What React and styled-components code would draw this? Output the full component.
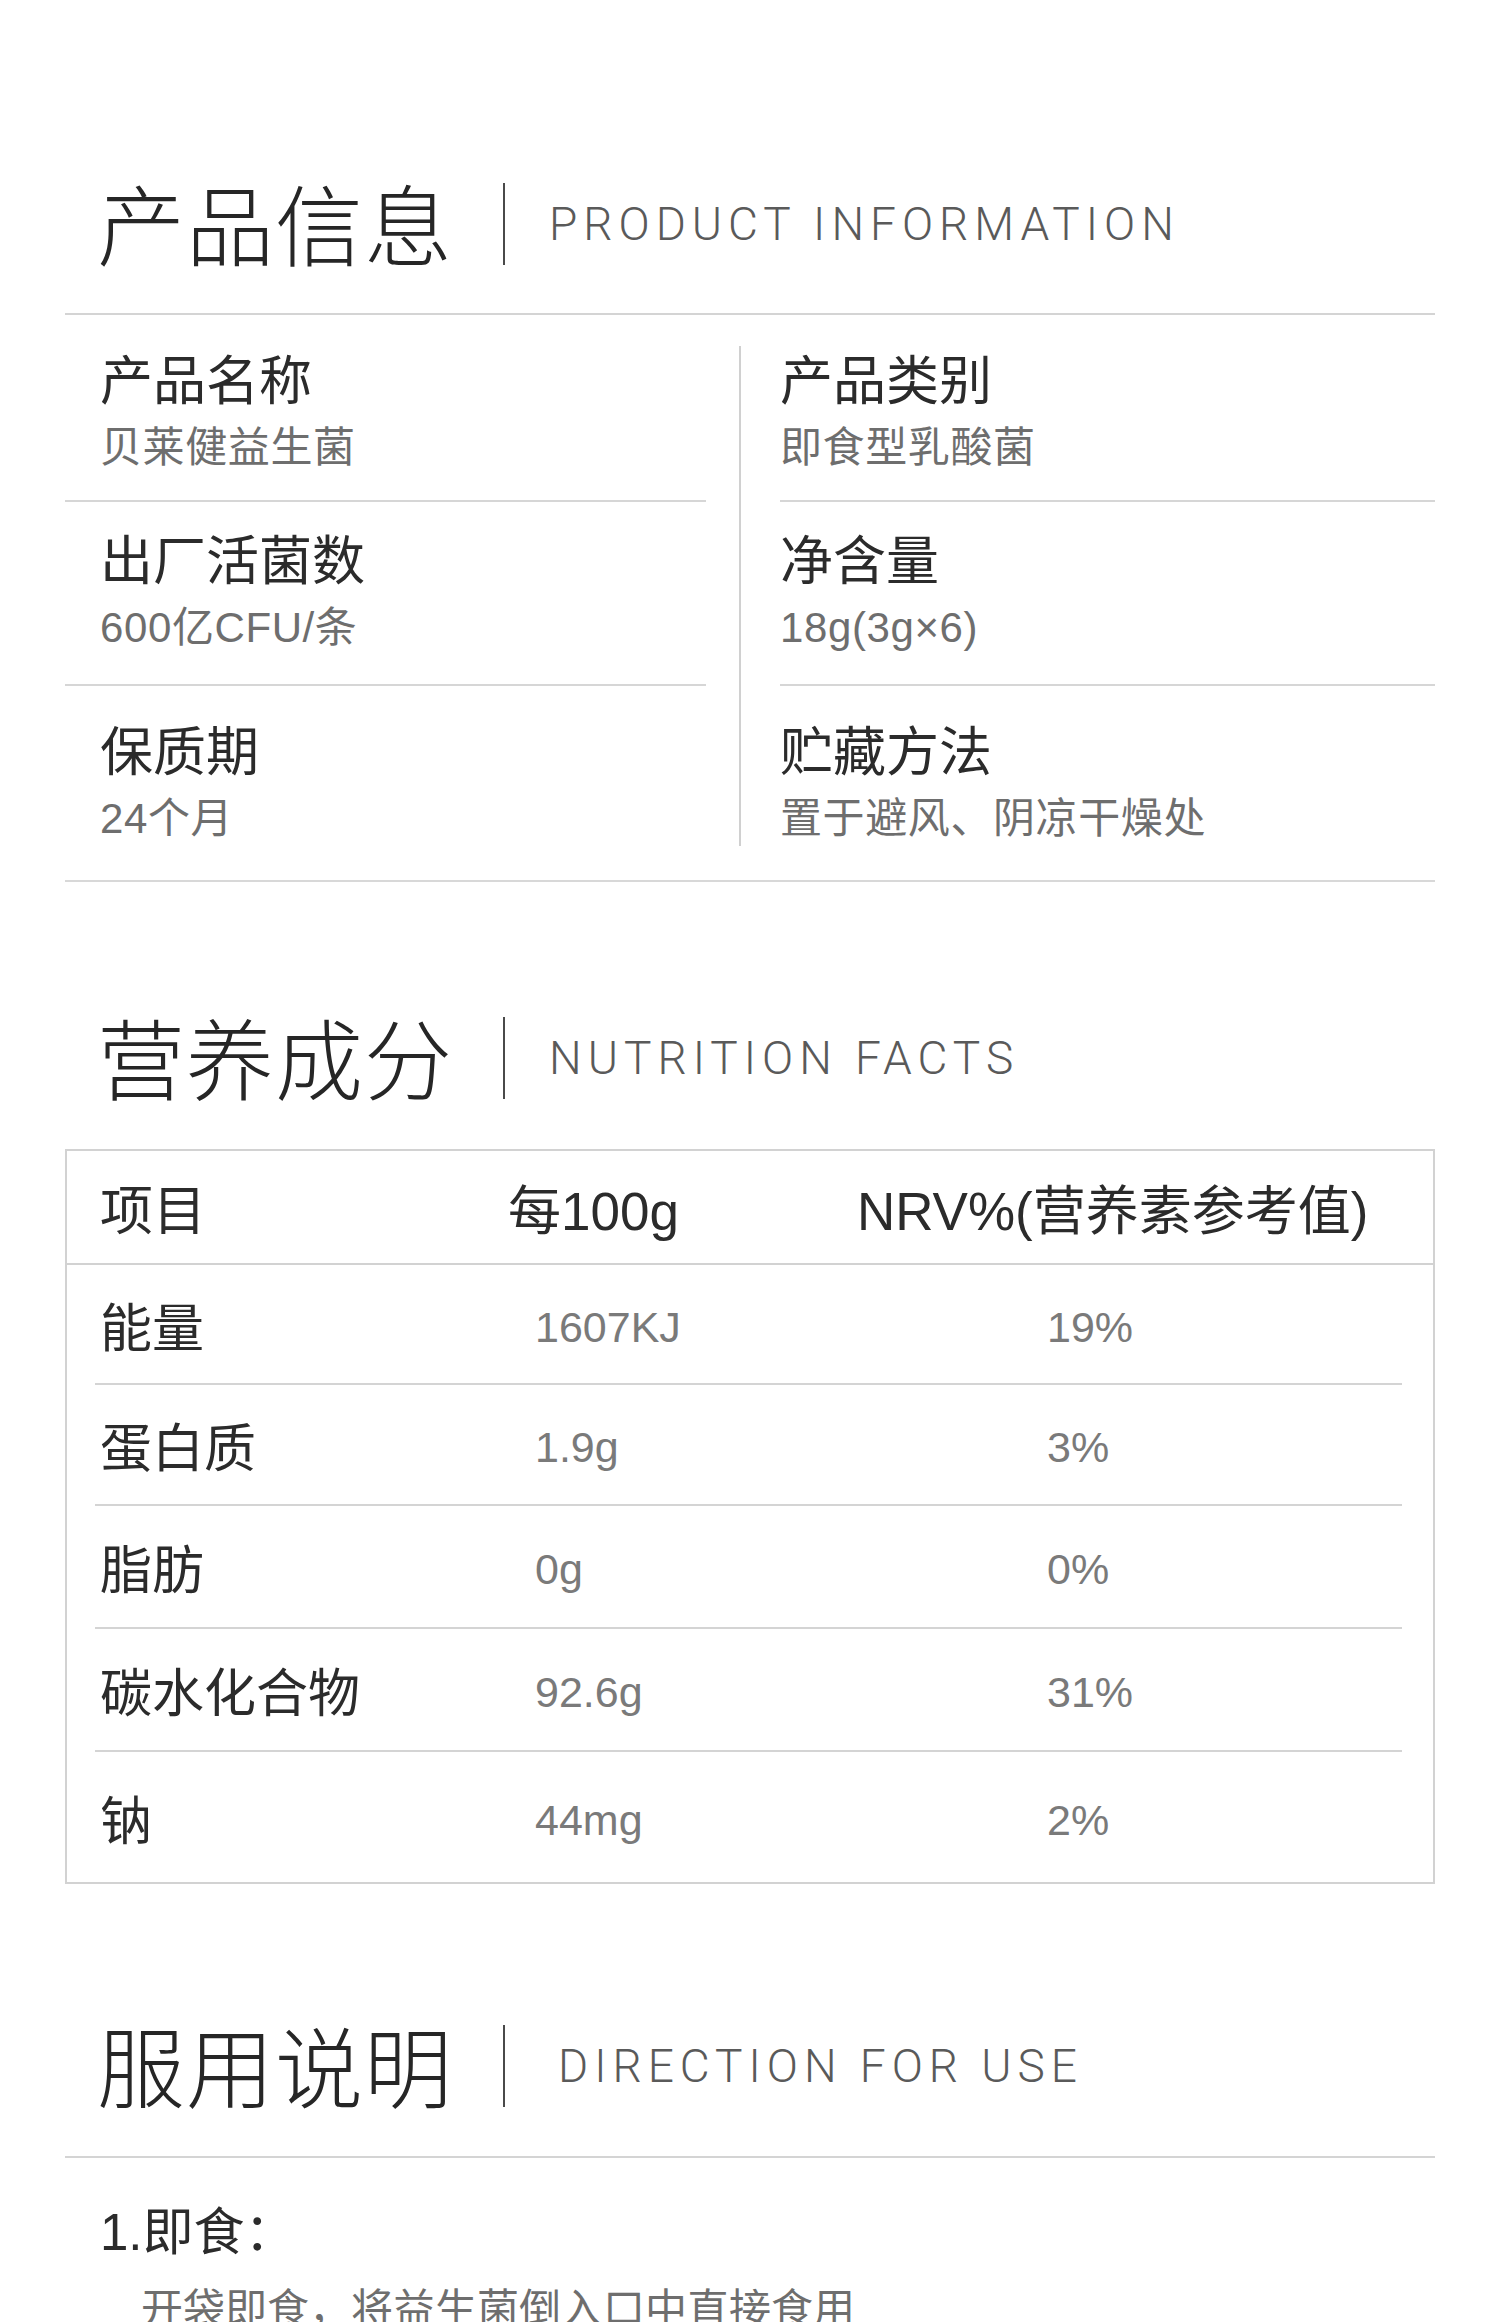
import React from "react";
import styled, { createGlobalStyle } from "styled-components";

const GlobalStyle = createGlobalStyle`
  html, body { margin: 0; padding: 0; background: #ffffff; }
  body { font-family: "Liberation Sans", "Noto Sans CJK SC", sans-serif; color: #333; }
  * { box-sizing: border-box; }
`;

const Page = styled.div`
  width: 1500px;
  padding: 161px 65px 0;
  background: #fff;
`;

const SectionHead = styled.div`
  display: flex;
  align-items: center;
  height: 120px;
  margin-top: ${(p) => p.$top || 0}px;
  padding-left: 32px;
`;

const Title = styled.h2`
  margin: 0;
  font-family: "Noto Sans CJK SC", sans-serif;
  font-weight: 300;
  font-size: 88px;
  line-height: 1;
  color: #262626;
  letter-spacing: 1px;
`;

const VBar = styled.span`
  width: 2px;
  height: 82px;
  margin: 6px 44px 0 50px;
  background: #4a4a4a;
`;

const SubTitle = styled.span`
  margin-top: 6px;
  margin-left: ${(p) => p.$shift || 0}px;
  font-family: "Roboto", "Liberation Sans", sans-serif;
  font-weight: 300;
  font-size: 46px;
  letter-spacing: 6px;
  color: #5a5a5a;
`;

const HRule = styled.div`
  height: 2px;
  background: #d4d4d4;
  margin-top: ${(p) => p.$top || 0}px;
`;

const InfoGrid = styled.div`
  display: flex;
  border-bottom: 2px solid #d8d8d8;
`;

const InfoColumn = styled.div`
  display: flex;
  flex-direction: column;
  width: ${(p) => p.$width}px;
  margin-right: ${(p) => p.$right || 0}px;
  margin-left: ${(p) => p.$left || 0}px;
`;

const InfoDivider = styled.div`
  width: 2px;
  background: #d0d0d0;
  margin: 31px 0 34px;
`;

const InfoCell = styled.div`
  height: ${(p) => p.$h}px;
  padding: ${(p) => p.$padTop}px 0 0 ${(p) => p.$pad}px;
  border-top: ${(p) => (p.$first ? "none" : "2px solid #d6d6d6")};
`;

const Label = styled.div`
  font-family: "Noto Sans CJK SC", sans-serif;
  font-size: 53px;
  line-height: 64px;
  color: #2b2b2b;
`;

const Value = styled.div`
  margin-top: 14px;
  font-family: "Liberation Sans", "Noto Sans CJK SC", sans-serif;
  font-size: 42px;
  line-height: 50px;
  letter-spacing: 0.6px;
  color: #6e6e6e;
`;

const Table = styled.div`
  margin-top: 34px;
  border: 2px solid #d2d2d2;
`;

const HeadRow = styled.div`
  display: grid;
  grid-template-columns: 408px 349px 1fr;
  align-items: center;
  height: 114px;
  padding-left: 33px;
  border-bottom: 2px solid #d2d2d2;
  font-family: "Liberation Sans", "Noto Sans CJK SC", sans-serif;
  font-size: 53px;
  color: #2b2b2b;
`;

const BodyRow = styled.div`
  display: grid;
  grid-template-columns: 435px 512px 1fr;
  align-items: center;
  height: ${(p) => p.$h}px;
  margin: 0 31px 0 28px;
  padding-left: 5px;
  border-bottom: ${(p) => (p.$last ? "none" : "2px solid #d4d4d4")};
`;

const RowLabel = styled.span`
  font-family: "Noto Sans CJK SC", sans-serif;
  font-size: 52px;
  color: #2b2b2b;
`;

const RowValue = styled.span`
  padding-top: 6px;
  font-family: "Liberation Sans", sans-serif;
  font-size: 43px;
  color: #7a7a7a;
`;

const StepTitle = styled.div`
  margin-top: 45px;
  padding-left: 35px;
  font-family: "Liberation Sans", "Noto Sans CJK SC", sans-serif;
  font-size: 51px;
  line-height: 60px;
  color: #2b2b2b;
`;

const StepText = styled.div`
  margin-top: 18px;
  padding-left: 76px;
  font-family: "Noto Sans CJK SC", sans-serif;
  font-size: 42px;
  line-height: 50px;
  color: #6e6e6e;
`;

const left = [
  ["产品名称", "贝莱健益生菌", 185, 30],
  ["出厂活菌数", "600亿CFU/条", 184, 23],
  ["保质期", "24个月", 196, 30],
];
const right = [
  ["产品类别", "即食型乳酸菌", 185, 30],
  ["净含量", "18g(3g×6)", 184, 23],
  ["贮藏方法", "置于避风、阴凉干燥处", 196, 30],
];

const nutrition = [
  ["能量", "1607KJ", "19%", 120],
  ["蛋白质", "1.9g", "3%", 121],
  ["脂肪", "0g", "0%", 123],
  ["碳水化合物", "92.6g", "31%", 123],
  ["钠", "44mg", "2%", 130],
];

function Head({ cn, en, top, shift }) {
  return (
    <SectionHead $top={top}>
      <Title>{cn}</Title>
      <VBar />
      <SubTitle $shift={shift}>{en}</SubTitle>
    </SectionHead>
  );
}

function InfoList({ items, pad }) {
  return items.map(([l, v, h, t], i) => (
    <InfoCell key={l} $h={h} $pad={pad} $padTop={t} $first={i === 0}>
      <Label>{l}</Label>
      <Value>{v}</Value>
    </InfoCell>
  ));
}

export default function App() {
  return (
    <>
      <GlobalStyle />
      <Page>
        <Head cn="产品信息" en="PRODUCT INFORMATION" />
        <HRule $top={32} />
        <InfoGrid>
          <InfoColumn $width={641} $right={33}>
            <InfoList items={left} pad={35} />
          </InfoColumn>
          <InfoDivider />
          <InfoColumn $width={655} $left={39}>
            <InfoList items={right} pad={0} />
          </InfoColumn>
        </InfoGrid>

        <Head cn="营养成分" en="NUTRITION FACTS" top={113} />
        <Table>
          <HeadRow>
            <span>项目</span>
            <span>每100g</span>
            <span>NRV%(营养素参考值)</span>
          </HeadRow>
          {nutrition.map(([l, a, b, h], i) => (
            <BodyRow key={l} $h={h} $last={i === nutrition.length - 1}>
              <RowLabel>{l}</RowLabel>
              <RowValue>{a}</RowValue>
              <RowValue>{b}</RowValue>
            </BodyRow>
          ))}
        </Table>

        <Head cn="服用说明" en="DIRECTION FOR USE" top={119} shift={9} />
        <HRule $top={33} />
        <StepTitle>1.即食：</StepTitle>
        <StepText>开袋即食，将益生菌倒入口中直接食用</StepText>
      </Page>
    </>
  );
}
